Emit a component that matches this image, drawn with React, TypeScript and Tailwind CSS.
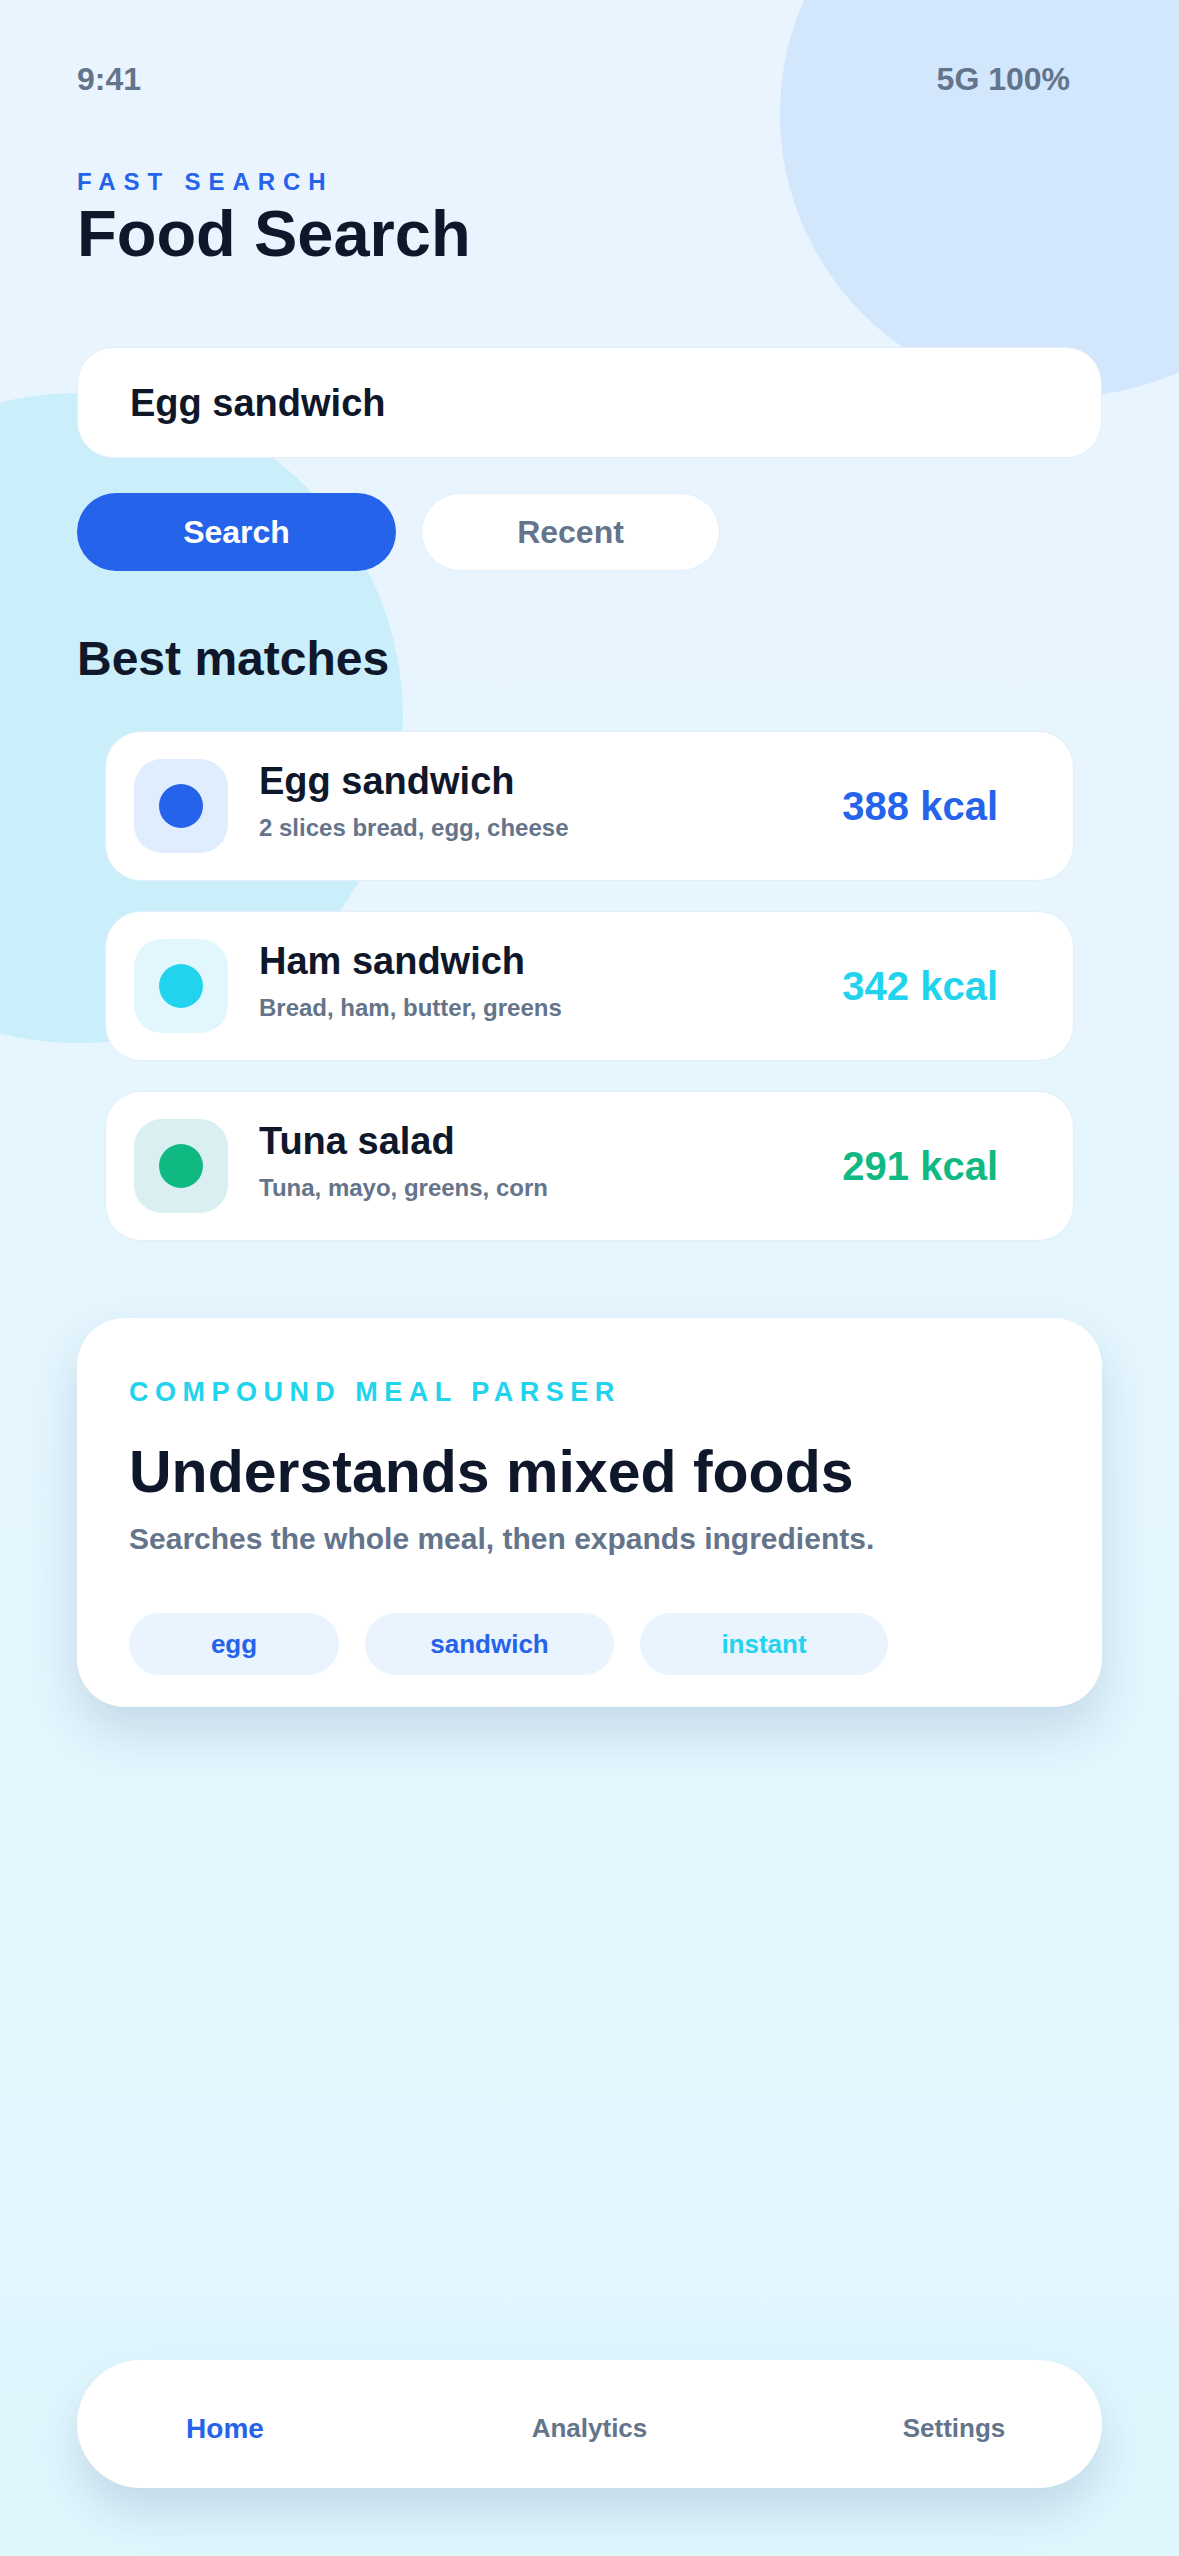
import React from "react";

interface Match {
  name: string;
  detail: string;
  kcal: string;
  dot: string;
  box: string;
  text: string;
}

const matches: Match[] = [
  {
    name: "Egg sandwich",
    detail: "2 slices bread, egg, cheese",
    kcal: "388 kcal",
    dot: "bg-[#2563eb]",
    box: "bg-[#e0edfc]",
    text: "text-[#2563eb]",
  },
  {
    name: "Ham sandwich",
    detail: "Bread, ham, butter, greens",
    kcal: "342 kcal",
    dot: "bg-[#22d3ee]",
    box: "bg-[#e1f7fd]",
    text: "text-[#22d3ee]",
  },
  {
    name: "Tuna salad",
    detail: "Tuna, mayo, greens, corn",
    kcal: "291 kcal",
    dot: "bg-[#10b981]",
    box: "bg-[#d9eff1]",
    text: "text-[#10b981]",
  },
];

const MatchCard: React.FC<{ item: Match }> = ({ item }) => {
  return (
    <div className="flex h-[150px] items-center rounded-[36px] border border-[#e4eef8] bg-white pl-[28px] pr-[75px]">
      {/* tinted icon tile */}
      <div className={`flex h-[94px] w-[94px] shrink-0 items-center justify-center rounded-[28px] ${item.box}`}>
        <div className={`h-[44px] w-[44px] rounded-full ${item.dot}`} />
      </div>
      <div className="ml-[31px] flex flex-col pb-[10px]">
        <span className="text-[38px] font-bold leading-none text-[#0f172a]">{item.name}</span>
        <span className="mt-[16px] text-[24px] font-bold leading-none text-[#64748b]">{item.detail}</span>
      </div>
      <span className={`ml-auto text-[40px] font-bold leading-none ${item.text}`}>{item.kcal}</span>
    </div>
  );
};

export default function App() {
  return (
    <div className="relative flex h-[2556px] w-full flex-col overflow-hidden bg-gradient-to-b from-[#eaf4fe] to-[#e0f7fe] font-['Liberation_Sans',Arial,sans-serif]">
      {/* background blobs */}
      <div className="absolute left-[780px] top-[-169px] h-[566px] w-[566px] rounded-full bg-[#d2e7fc]" />
      <div className="absolute left-[-247px] top-[393px] h-[650px] w-[650px] rounded-full bg-[#caeefa]" />

      <div className="relative flex flex-1 flex-col px-[77px]">
        {/* status bar */}
        <div className="flex items-center justify-between pr-[32px] pt-[63px] text-[32px] font-bold leading-none text-[#64748b]">
          <span>9:41</span>
          <span>5G 100%</span>
        </div>

        <p className="mt-[75px] text-[24px] font-bold uppercase leading-none tracking-[0.33em] text-[#2563eb]">Fast Search</p>
        <h1 className="mt-[7px] text-[65px] font-bold leading-none text-[#0f172a]">Food Search</h1>

        {/* search field */}
        <div className="mt-[81px] flex h-[111px] items-center rounded-[36px] border border-[#e4eef8] bg-white px-[52px]">
          <span className="text-[38px] font-bold leading-none text-[#0f172a]">Egg sandwich</span>
        </div>

        <div className="mt-[35px] flex gap-[25px]">
          <button className="flex h-[78px] w-[319px] items-center justify-center rounded-full bg-[#2563eb] text-[32px] font-bold text-white">
            Search
          </button>
          <button className="flex h-[78px] w-[299px] items-center justify-center rounded-full border border-[#e4eef8] bg-white text-[32px] font-bold text-[#64748b]">
            Recent
          </button>
        </div>

        <h2 className="mt-[64px] text-[48px] font-bold leading-none text-[#0f172a]">Best matches</h2>

        <div className="mt-[48px] flex flex-col gap-[30px] px-[28px]">
          {matches.map((m) => (
            <MatchCard key={m.name} item={m} />
          ))}
        </div>

        {/* compound parser card */}
        <div className="mt-[77px] flex h-[389px] flex-col rounded-[48px] bg-white px-[52px] pt-[61px] shadow-[0_24px_48px_rgba(30,70,110,0.16)]">
          <p className="text-[27px] font-bold uppercase leading-none tracking-[0.24em] text-[#22d3ee]">Compound meal parser</p>
          <h3 className="mt-[37px] text-[59px] font-bold leading-none text-[#0f172a]">Understands mixed foods</h3>
          <p className="mt-[22px] text-[30px] font-bold leading-none text-[#64748b]">Searches the whole meal, then expands ingredients.</p>
          <div className="mt-[59px] flex gap-[26px]">
            <span className="flex h-[62px] w-[210px] items-center justify-center rounded-full bg-[#eaf4fe] text-[26px] font-bold text-[#2563eb]">egg</span>
            <span className="flex h-[62px] w-[249px] items-center justify-center rounded-full bg-[#eaf4fe] text-[26px] font-bold text-[#2563eb]">sandwich</span>
            <span className="flex h-[62px] w-[248px] items-center justify-center rounded-full bg-[#eaf4fe] text-[26px] font-bold text-[#22d3ee]">instant</span>
          </div>
        </div>

        {/* bottom nav */}
        <nav className="mb-[68px] mt-auto flex h-[128px] items-center justify-between rounded-full bg-white px-[48px] pt-[9px] shadow-[0_24px_48px_rgba(30,70,110,0.16)]">
          <span className="w-[200px] text-center text-[28px] font-bold text-[#2563eb]">Home</span>
          <span className="w-[200px] text-center text-[26px] font-bold text-[#64748b]">Analytics</span>
          <span className="w-[200px] text-center text-[26px] font-bold text-[#64748b]">Settings</span>
        </nav>
      </div>
    </div>
  );
}
